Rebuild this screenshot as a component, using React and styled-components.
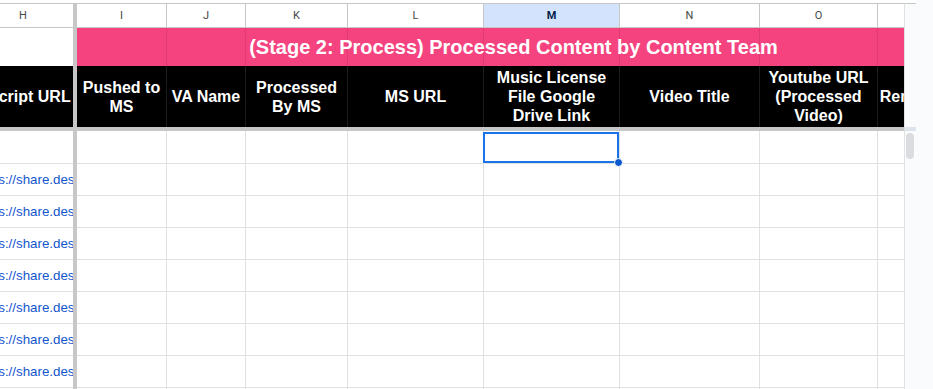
import styled, { createGlobalStyle } from 'styled-components';

const GlobalStyle = createGlobalStyle`
  html, body {
    margin: 0;
    padding: 0;
    height: 100%;
    overflow: hidden;
    background: #fff;
  }
  #root { height: 100%; }
`;

const COLUMNS = [
  { key: 'I', width: 90, title: 'Pushed to MS' },
  { key: 'J', width: 79, title: 'VA Name' },
  { key: 'K', width: 102, title: 'Processed By MS' },
  { key: 'L', width: 136, title: 'MS URL' },
  { key: 'M', width: 136, title: 'Music License File Google Drive Link' },
  { key: 'N', width: 140, title: 'Video Title' },
  { key: 'O', width: 118, title: 'Youtube URL (Processed Video)' },
  { key: 'P', width: 72, title: 'Remarks' },
];

const ROWS = [
  { link: '', h: 33 },
  { link: 'https://share.descript.com/view/4kQxP2', h: 32 },
  { link: 'https://share.descript.com/view/8hTzV1', h: 32 },
  { link: 'https://share.descript.com/view/2mNcR7', h: 32 },
  { link: 'https://share.descript.com/view/6pLwA3', h: 32 },
  { link: 'https://share.descript.com/view/9sDfG5', h: 32 },
  { link: 'https://share.descript.com/view/1bJkH8', h: 32 },
  { link: 'https://share.descript.com/view/5yUeT4', h: 32 },
  { link: 'https://share.descript.com/view/3xWqZ0', h: 32 },
];

const Page = styled.div`
  display: flex;
  height: 100%;
`;

const Sheet = styled.div`
  width: 916px;
  padding-top: 3px;
  display: flex;
  box-sizing: border-box;
`;

const Viewport = styled.div`
  width: 904px;
  overflow: hidden;
  border-top: 1px solid #c4c7c5;
`;

const Grid = styled.div`
  margin-left: -27px;
  width: max-content;
`;

const Row = styled.div`
  display: flex;
  height: ${({ $h }) => $h}px;
  background: ${({ $bg }) => $bg || 'transparent'};
`;

const Freeze = styled.div`
  width: 4px;
  flex: none;
  background: #c7c7c7;
`;

const FreezeLine = styled.div`
  height: 4px;
  background: #c7c7c7;
`;

/* column letters */
const LetterCell = styled.div`
  width: ${({ $w }) => $w}px;
  flex: none;
  box-sizing: border-box;
  border-right: ${({ $edge }) => ($edge ? 'none' : '1px solid #c4c7c5')};
  border-bottom: 1px solid #c4c7c5;
  display: flex;
  align-items: center;
  justify-content: center;
  font-family: Roboto, "Liberation Sans", sans-serif;
  font-size: 11px;
  font-weight: ${({ $active }) => ($active ? 700 : 400)};
  color: ${({ $active }) => ($active ? '#041e49' : '#444746')};
  background: ${({ $active }) => ($active ? '#d3e3fd' : '#fff')};
`;

/* merged title band */
const BlankCell = styled.div`
  width: ${({ $w }) => $w}px;
  flex: none;
  background: #fff;
`;

const TitleBand = styled.div`
  position: relative;
  display: flex;
`;

const PinkCell = styled.div`
  width: ${({ $w }) => $w}px;
  flex: none;
  box-sizing: border-box;
  background: #f4437f;
  border-right: 1px solid #e23b74;
`;

const Title = styled.div`
  position: absolute;
  inset: 0;
  display: flex;
  align-items: center;
  justify-content: center;
  color: #fff;
  font-family: "Liberation Sans", Arial, sans-serif;
  font-weight: 700;
  font-size: 20px;
  white-space: nowrap;
`;

/* black header */
const HeadCell = styled.div`
  width: ${({ $w }) => $w}px;
  flex: none;
  box-sizing: border-box;
  border-right: ${({ $edge }) => ($edge ? 'none' : '1px solid #1c1c1c')};
  padding: ${({ $edge }) => ($edge ? '0 6px 0 0' : '0 4px')};
  display: flex;
  align-items: center;
  justify-content: center;
  text-align: center;
  overflow: hidden;
  white-space: ${({ $nowrap }) => ($nowrap ? 'nowrap' : 'normal')};
  color: #fff;
  font-family: "Liberation Sans", Arial, sans-serif;
  font-weight: 700;
  font-size: 16px;
  line-height: 19px;
`;

/* body cells */
const DataCell = styled.div`
  position: relative;
  width: ${({ $w }) => $w}px;
  flex: none;
  box-sizing: border-box;
  border-right: 1px solid #e1e1e1;
  border-bottom: 1px solid #e1e1e1;
`;

const LinkCell = styled.div`
  width: ${({ $w }) => $w}px;
  flex: none;
  box-sizing: border-box;
  border-bottom: 1px solid #e1e1e1;
  padding: 0 3px 7px 3px;
  display: flex;
  align-items: flex-end;
  overflow: hidden;
  white-space: nowrap;
  color: #1155cc;
  font-family: "Liberation Sans", Arial, sans-serif;
  font-size: 13.33px;
  line-height: 17px;
`;

const Selection = styled.div`
  position: absolute;
  z-index: 2;
  left: -1px;
  top: 1px;
  right: 0;
  bottom: 0;
  border: 2px solid #1a73e8;
`;

const Handle = styled.div`
  position: absolute;
  right: -6px;
  bottom: -6px;
  width: 9px;
  height: 9px;
  box-sizing: border-box;
  border-radius: 50%;
  background: #0b57d0;
  border: 1px solid #fff;
`;

/* vertical scrollbar */
const ScrollCol = styled.div`
  width: 12px;
  box-sizing: border-box;
  border-top: 1px solid #c4c7c5;
  border-left: 1px solid #e1e1e1;
  background: #f9fbfd;
  display: flex;
  flex-direction: column;
`;

const ScrollHead = styled.div`
  height: 123px;
`;

const ScrollFreeze = styled.div`
  height: 4px;
  background: #dde3ea;
`;

const Thumb = styled.div`
  width: 8px;
  height: 26px;
  margin: 2px 0 0 1px;
  border-radius: 4px;
  background: #dadce0;
`;

const Side = styled.div`
  flex: 1;
  background: #f9fbfd;
`;

const H_WIDTH = 100;
const TITLE = '(Stage 2: Process) Processed Content by Content Team';

export default function App() {
  return (
    <Page>
      <GlobalStyle />
      <Sheet>
        <Viewport>
          <Grid>
            <Row $h={24}>
              <LetterCell $w={H_WIDTH} $edge>H</LetterCell>
              <Freeze />
              {COLUMNS.map((c) => (
                <LetterCell key={c.key} $w={c.width} $active={c.key === 'M'}>
                  {c.key}
                </LetterCell>
              ))}
            </Row>

            <Row $h={38}>
              <BlankCell $w={H_WIDTH} />
              <Freeze />
              <TitleBand>
                {COLUMNS.map((c) => (
                  <PinkCell key={c.key} $w={c.width} />
                ))}
                <Title>{TITLE}</Title>
              </TitleBand>
            </Row>

            <Row $h={61} $bg="#000">
              <HeadCell $w={H_WIDTH} $edge $nowrap>Descript URL</HeadCell>
              <Freeze />
              {COLUMNS.map((c) => (
                <HeadCell key={c.key} $w={c.width}>
                  {c.title}
                </HeadCell>
              ))}
            </Row>

            <FreezeLine />

            {ROWS.map((r, i) => (
              <Row key={i} $h={r.h}>
                <LinkCell $w={H_WIDTH}>{r.link}</LinkCell>
                <Freeze />
                {COLUMNS.map((c) => (
                  <DataCell key={c.key} $w={c.width}>
                    {i === 0 && c.key === 'M' && (
                      <Selection>
                        <Handle />
                      </Selection>
                    )}
                  </DataCell>
                ))}
              </Row>
            ))}
          </Grid>
        </Viewport>
        <ScrollCol>
          <ScrollHead />
          <ScrollFreeze />
          <Thumb />
        </ScrollCol>
      </Sheet>
      <Side />
    </Page>
  );
}
